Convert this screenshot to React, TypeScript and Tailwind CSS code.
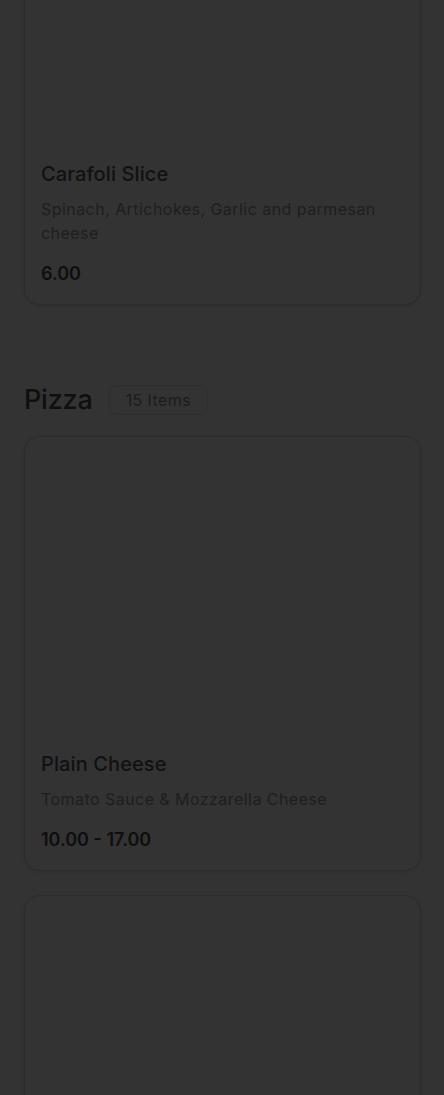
import React from "react";

const font = { fontFamily: "Inter, 'Noto Sans', sans-serif" };

function Card({ title, desc, price }: { title: string; desc: string; price: string }) {
  return (
    <div className="rounded-[16px] border border-[#2c2c2c] bg-[#333333] shadow-[0_1px_3px_rgba(0,0,0,0.12)] overflow-hidden">
      <div className="h-[297px]" />
      <div className="px-4 pt-4 pb-[17px]">
        <div className="text-[20px] leading-[28px] font-medium text-[#111111] tracking-[0.1px]">{title}</div>
        <div className="mt-[9px] text-[16px] leading-[24px] text-[#1e1e1e] tracking-[0.45px]">{desc}</div>
        <div className="mt-[16px] text-[18px] leading-[26px] font-semibold text-[#0e0e0e]">{price}</div>
      </div>
    </div>
  );
}

export default function App() {
  return (
    <div className="w-[444px] h-[1095px] overflow-hidden bg-[#333333]" style={font}>
      <div className="pl-6 pr-[23px] -mt-[154px]">
        <Card title="Carafoli Slice" desc="Spinach, Artichokes, Garlic and parmesan cheese" price="6.00" />
        <div className="mt-[77px] flex items-center gap-4">
          <h2 className="text-[27px] leading-[36px] font-medium text-[#0f0f0f] tracking-[-0.2px]">Pizza</h2>
          <span className="rounded-lg border border-[#2e2e2e] px-4 h-[30px] flex items-center text-[16px] tracking-[0.4px] text-[#1c1c1c]">15 Items</span>
        </div>
        <div className="mt-[18px] flex flex-col gap-6">
          <Card title="Plain Cheese" desc="Tomato Sauce & Mozzarella Cheese" price="10.00 - 17.00" />
          <Card title="" desc="" price="" />
        </div>
      </div>
    </div>
  );
}
